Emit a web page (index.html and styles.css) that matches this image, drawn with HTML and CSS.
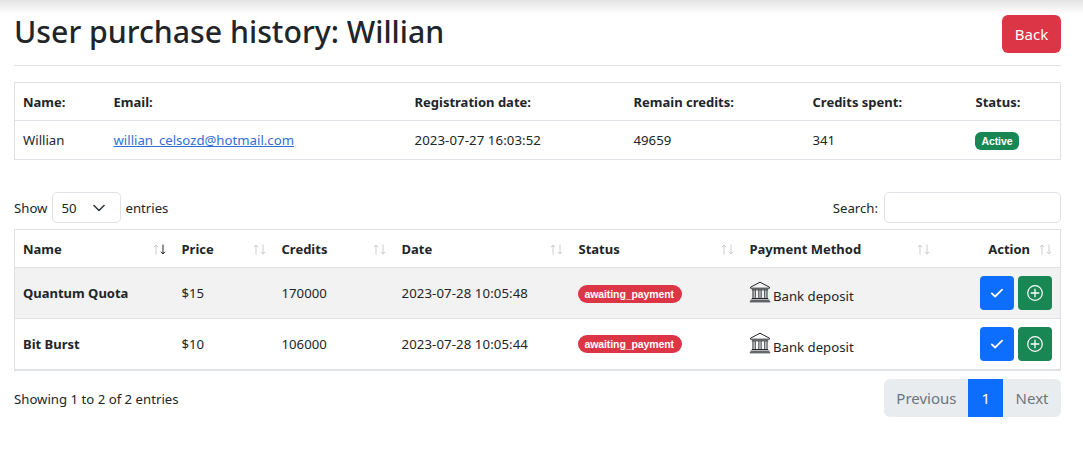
FILE: index.html
```html
<!DOCTYPE html>
<html lang="en">
<head>
    <meta charset="UTF-8">
    <meta name="viewport" content="width=device-width, initial-scale=1.0">
    <title>User purchase history</title>
    <link rel="stylesheet" href="styles.css">
</head>
<body>

<div class="top-shadow"></div>

<div class="page">
    <div class="page-head">
        <h1>User purchase history: Willian</h1>
        <a class="btn btn-back" href="#back">Back</a>
    </div>

    <table class="info-table">
        <colgroup>
            <col class="i1"><col class="i2"><col class="i3"><col class="i4"><col class="i5"><col class="i6">
        </colgroup>
        <tr>
            <th>Name:</th>
            <th>Email:</th>
            <th>Registration date:</th>
            <th>Remain credits:</th>
            <th>Credits spent:</th>
            <th>Status:</th>
        </tr>
        <tr>
            <td>Willian</td>
            <td><a href="#mail">willian_celsozd@hotmail.com</a></td>
            <td class="date">2023-07-27 16:03:52</td>
            <td>49659</td>
            <td>341</td>
            <td><span class="badge badge-green">Active</span></td>
        </tr>
    </table>

    <div class="table-controls">
        <div class="length">
            Show
            <div class="select">
                <span>50</span>
                <svg width="12" height="8" viewBox="0 0 12 8"><path d="M1 1.5l5 5 5-5" fill="none" stroke="#343a40" stroke-width="1.6" stroke-linecap="round" stroke-linejoin="round"/></svg>
            </div>
            entries
        </div>
        <div class="search">
            Search:
            <div class="search-input"></div>
        </div>
    </div>

    <table class="data-table">
        <colgroup>
            <col class="d1"><col class="d2"><col class="d3"><col class="d4"><col class="d5"><col class="d6"><col class="d7">
        </colgroup>
        <thead>
            <tr>
                <th>Name<svg class="sort" width="13" height="11" viewBox="0 0 13 11"><use class="arrow" href="#arrow-up"/><use class="arrow-dark" href="#arrow-down"/></svg></th>
                <th>Price<svg class="sort" width="13" height="11" viewBox="0 0 13 11"><use class="arrow" href="#arrow-up"/><use class="arrow" href="#arrow-down"/></svg></th>
                <th>Credits<svg class="sort" width="13" height="11" viewBox="0 0 13 11"><use class="arrow" href="#arrow-up"/><use class="arrow" href="#arrow-down"/></svg></th>
                <th>Date<svg class="sort" width="13" height="11" viewBox="0 0 13 11"><use class="arrow" href="#arrow-up"/><use class="arrow" href="#arrow-down"/></svg></th>
                <th>Status<svg class="sort" width="13" height="11" viewBox="0 0 13 11"><use class="arrow" href="#arrow-up"/><use class="arrow" href="#arrow-down"/></svg></th>
                <th>Payment Method<svg class="sort" width="13" height="11" viewBox="0 0 13 11"><use class="arrow" href="#arrow-up"/><use class="arrow" href="#arrow-down"/></svg></th>
                <th class="right">Action<svg class="sort" width="13" height="11" viewBox="0 0 13 11"><use class="arrow" href="#arrow-up"/><use class="arrow" href="#arrow-down"/></svg></th>
            </tr>
        </thead>
        <tbody>
            <tr class="odd">
                <td class="bold">Quantum Quota</td>
                <td>$15</td>
                <td>170000</td>
                <td class="date">2023-07-28 10:05:48</td>
                <td><span class="badge badge-red">awaiting_payment</span></td>
                <td>
                    <svg class="bank" width="22" height="22" viewBox="0 0 22 22"><use href="#bank-icon"/></svg>
                    Bank deposit
                </td>
                <td class="actions">
                    <a class="btn-icon blue" href="#ok"><svg width="14" height="14" viewBox="0 0 14 14"><use href="#check-icon"/></svg></a>
                    <a class="btn-icon green" href="#add"><svg width="16" height="16" viewBox="0 0 16 16"><use href="#plus-icon"/></svg></a>
                </td>
            </tr>
            <tr>
                <td class="bold">Bit Burst</td>
                <td>$10</td>
                <td>106000</td>
                <td class="date">2023-07-28 10:05:44</td>
                <td><span class="badge badge-red">awaiting_payment</span></td>
                <td>
                    <svg class="bank" width="22" height="22" viewBox="0 0 22 22"><use href="#bank-icon"/></svg>
                    Bank deposit
                </td>
                <td class="actions">
                    <a class="btn-icon blue" href="#ok"><svg width="14" height="14" viewBox="0 0 14 14"><use href="#check-icon"/></svg></a>
                    <a class="btn-icon green" href="#add"><svg width="16" height="16" viewBox="0 0 16 16"><use href="#plus-icon"/></svg></a>
                </td>
            </tr>
        </tbody>
    </table>

    <div class="table-footer">
        <div class="table-info">Showing 1 to 2 of 2 entries</div>
        <div class="pagination">
            <a class="page-link" href="#prev">Previous</a>
            <a class="page-link current" href="#1">1</a>
            <a class="page-link" href="#next">Next</a>
        </div>
    </div>
</div>

<!-- icons used by the rows -->
<svg class="defs" width="0" height="0">
    <defs>
        <g id="bank-icon" fill="none" stroke="#212529" stroke-width="1">
            <path d="M1.5 6.2L11 1.2l9.5 5v1h-19z"/>
            <path d="M2.8 8.8h16.4M2.8 17.5h16.4M1.5 19.2h19M.8 20.8h20.4"/>
            <path d="M4 9v8M6.2 9v8M9.9 9v8M12.1 9v8M15.8 9v8M18 9v8"/>
        </g>
        <path id="check-icon" d="M1.8 7.4l3.3 3.1 7-6.8" fill="none" stroke="#fff" stroke-width="1.8" stroke-linecap="round" stroke-linejoin="round"/>
        <g id="plus-icon" fill="none" stroke="#fff" stroke-width="1.2">
            <circle cx="8" cy="8" r="7.3"/>
            <path d="M8 4.2v7.6M4.2 8h7.6" stroke-width="1.3" stroke-linecap="round"/>
        </g>
        <path id="arrow-up" d="M3 10.5V1M.9 3.2L3 1l2.1 2.2" fill="none" stroke-width="1"/>
        <path id="arrow-down" d="M10 .5V10M7.9 7.8L10 10l2.1-2.2" fill="none" stroke-width="1"/>
    </defs>
</svg>

</body>
</html>
```

FILE: styles.css
```css
body {
    font-family: "Noto Sans", "Open Sans", sans-serif;
    font-size: 13.2px;
    color: #212529;
    margin: 0;
    padding: 0;
    background-color: #ffffff;
    overflow: hidden;
}

.top-shadow {
    height: 14px;
    background: linear-gradient(#e4e4e4, #ffffff);
}

.page {
    padding: 0 22px 0 14px;
}

.page-head {
    display: flex;
    justify-content: space-between;
    align-items: flex-start;
    height: 51px;
    border-bottom: 1px solid #dee2e6;
    margin-bottom: 16px;
}

h1 {
    font-size: 30.25px;
    font-weight: 500;
    line-height: 36px;
    margin: 0;
}

.btn-back {
    display: flex;
    align-items: center;
    justify-content: center;
    width: 59px;
    height: 38px;
    margin-top: 1px;
    background-color: #dc3545;
    color: #ffffff;
    border-radius: 6px;
    font-size: 15px;
    text-decoration: none;
}

table {
    border-collapse: collapse;
    table-layout: fixed;
    width: 1046px;
}

.date {
    letter-spacing: 0.1px;
}

/* info table */
.info-table {
    border: 1px solid #dee2e6;
}

.i1 { width: 91px; }
.i2 { width: 301px; }
.i3 { width: 219px; }
.i4 { width: 179px; }
.i5 { width: 163px; }
.i6 { width: 93px; }

.info-table th,
.info-table td {
    padding: 0 8px;
    text-align: left;
    border-bottom: 1px solid #dee2e6;
    box-sizing: border-box;
}

.info-table th {
    height: 38px;
}

.info-table td {
    height: 39px;
}

.info-table th,
.data-table th {
    font-weight: 700;
    font-size: 13px;
}

.info-table a {
    color: #2f6fd6;
}

.badge {
    display: inline-block;
    color: #ffffff;
    font-family: "Liberation Sans", sans-serif;
    font-size: 10.5px;
    font-weight: 700;
    line-height: 18px;
    margin-left: -1px;
    padding: 0 7px;
    border-radius: 6px;
    letter-spacing: -0.1px;
}

.badge-green { background-color: #198754; }
.badge-red {
    background-color: #dc3545;
    border-radius: 9px;
    padding-right: 8px;
}

/* show / search row */
.table-controls {
    display: flex;
    justify-content: space-between;
    align-items: center;
    height: 31px;
    margin-top: 32px;
    margin-bottom: 6px;
}

.length,
.search {
    display: flex;
    align-items: center;
    gap: 4px;
}

.search {
    gap: 6px;
}

.select {
    display: flex;
    align-items: center;
    justify-content: space-between;
    width: 69px;
    height: 31px;
    margin-left: 1px;
    padding: 0 15px 0 8px;
    border: 1px solid #dee2e6;
    border-radius: 5px;
    box-sizing: border-box;
}

.search-input {
    width: 177px;
    height: 31px;
    border: 1px solid #dee2e6;
    border-radius: 5px;
    box-sizing: border-box;
}

/* purchase table */
.data-table {
    border: 1px solid #dee2e6;
    border-bottom: 2px solid #dee2e6;
}

.d1 { width: 159px; }
.d2 { width: 100px; }
.d3 { width: 120px; }
.d4 { width: 177px; }
.d5 { width: 171px; }
.d6 { width: 196px; }
.d7 { width: 123px; }

.data-table th {
    position: relative;
    height: 38px;
    padding: 0 8px;
    text-align: left;
    border-bottom: 1px solid #dee2e6;
    box-sizing: border-box;
}

.data-table th.right {
    text-align: right;
    padding-right: 30px;
}

.sort {
    position: absolute;
    right: 8px;
    top: 14px;
}

.arrow {
    stroke: #c8ccd0;
}

.arrow-dark {
    stroke: #212529;
}

.data-table td {
    height: 51px;
    padding: 0 8px;
    border-bottom: 1px solid #dee2e6;
    box-sizing: border-box;
}

.data-table tbody tr:last-child td {
    border-bottom: 0;
}

.data-table tr.odd td {
    background-color: #f2f2f2;
}

.data-table td.bold {
    font-weight: 700;
    font-size: 13px;
}

.bank {
    vertical-align: -2px;
    margin-left: -1px;
    margin-right: -1px;
}

.actions {
    text-align: right;
    white-space: nowrap;
}

.btn-icon {
    display: inline-flex;
    align-items: center;
    justify-content: center;
    width: 34px;
    height: 34px;
    border-radius: 4px;
    margin-left: 0.5px;
    vertical-align: middle;
}

.blue { background-color: #0d6efd; }
.green { background-color: #198754; }

/* footer */
.table-footer {
    display: flex;
    justify-content: space-between;
    align-items: center;
    margin-top: 8px;
}

.table-info {
    padding-top: 2px;
}

.pagination {
    display: flex;
    height: 38px;
    border-radius: 6px;
    overflow: hidden;
    background-color: #e9ecef;
    font-size: 15px;
}

.page-link {
    display: flex;
    align-items: center;
    padding: 0 12.5px;
    color: #6c757d;
    text-decoration: none;
}

.page-link:first-child {
    padding-right: 12px;
}

.page-link.current {
    padding: 0 13px;
    background-color: #0d6efd;
    color: #ffffff;
}

.defs {
    position: absolute;
}
```
